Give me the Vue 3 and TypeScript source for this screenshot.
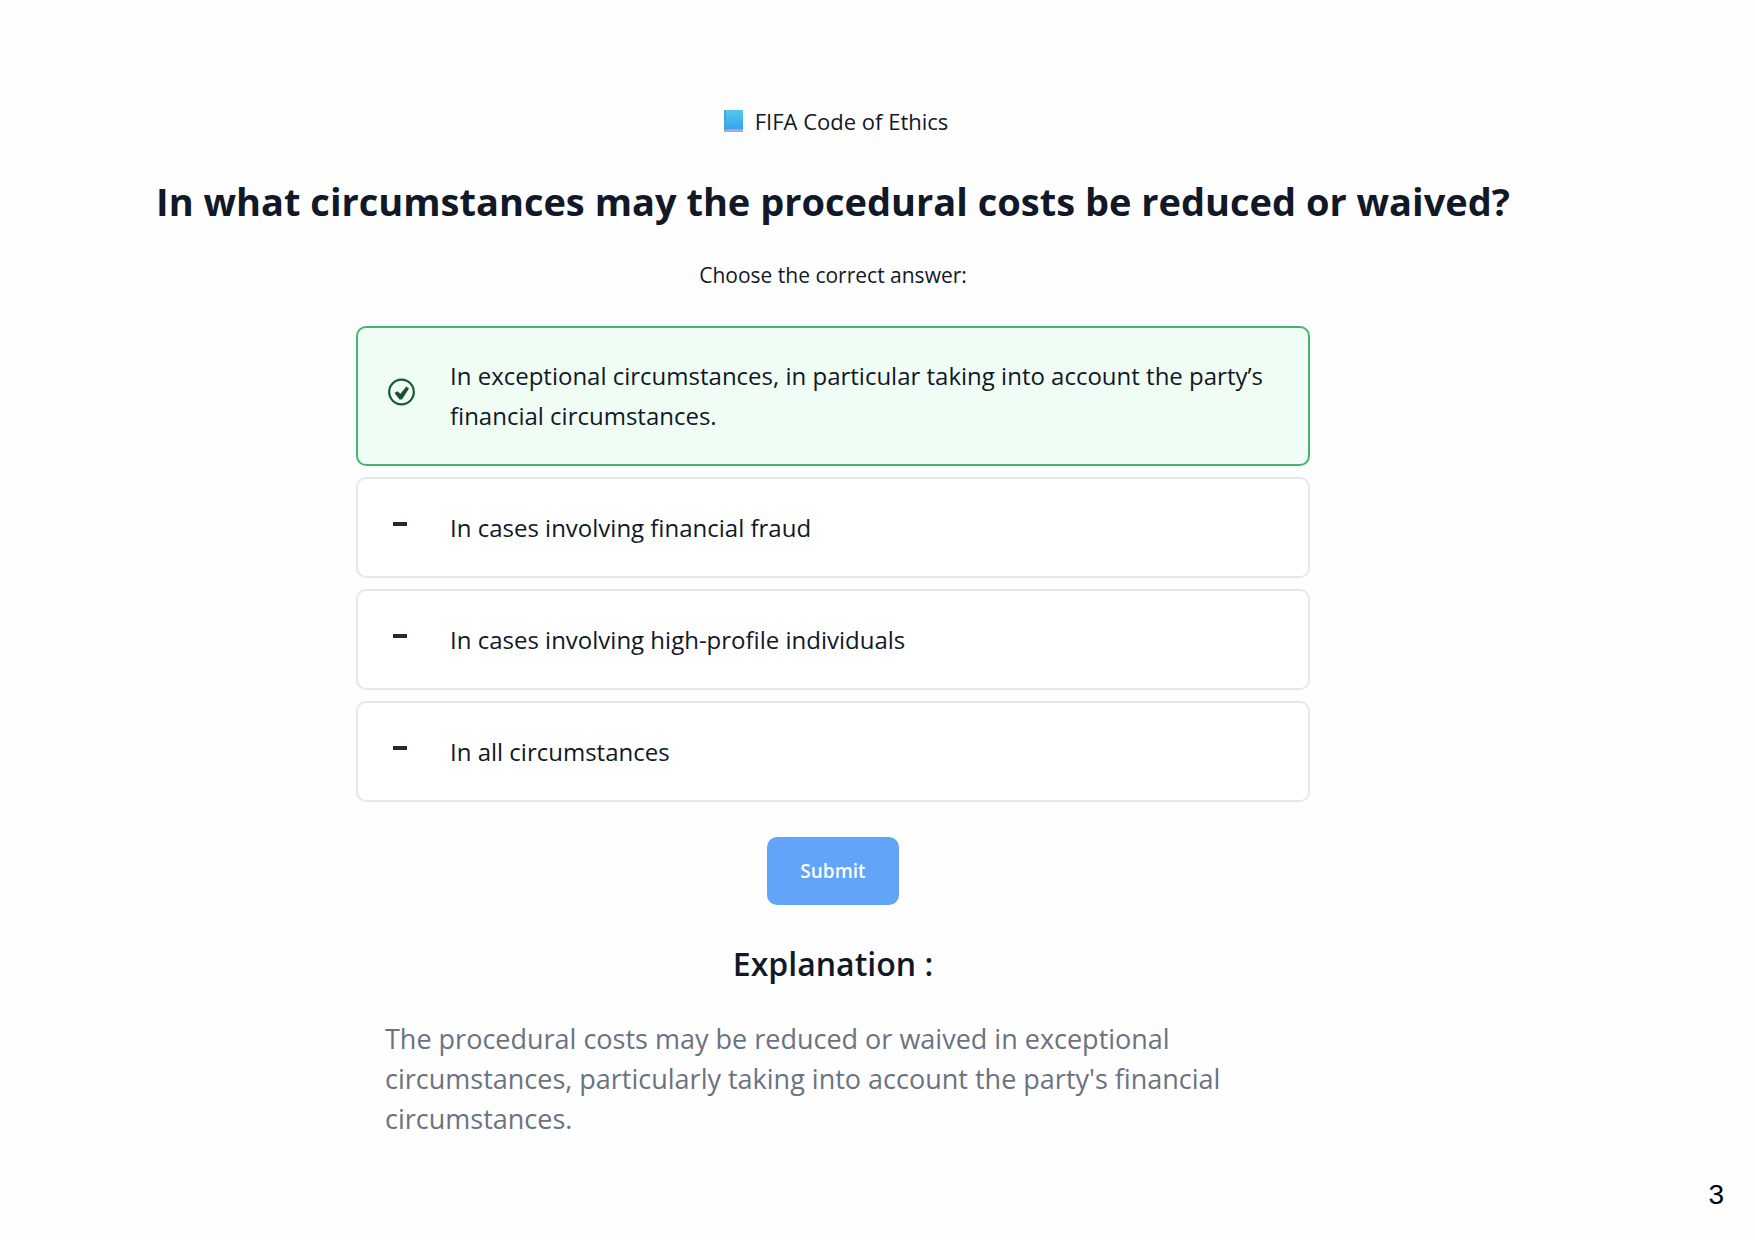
<script setup lang="ts">
import { ref } from 'vue'

interface Option {
  id: number
  text: string
}

const options: Option[] = [
  { id: 1, text: 'In exceptional circumstances, in particular taking into account the party’s financial circumstances.' },
  { id: 2, text: 'In cases involving financial fraud' },
  { id: 3, text: 'In cases involving high-profile individuals' },
  { id: 4, text: 'In all circumstances' },
]

const selected = ref(1)
</script>

<template>
  <div class="page">
    <main class="quiz">
      <p class="topic">
        <svg class="book" viewBox="0 0 19 22" aria-hidden="true">
          <defs>
            <linearGradient id="cover" x1="0" y1="0" x2="0" y2="1">
              <stop offset="0" stop-color="#55c8ee" />
              <stop offset="1" stop-color="#34a4ee" />
            </linearGradient>
          </defs>
          <rect width="19" height="22" fill="#a9a5d8" />
          <rect width="19" height="19" fill="url(#cover)" />
          <rect width="2" height="20" fill="#4fa3d6" />
        </svg>
        <span>FIFA Code of Ethics</span>
      </p>
      <h1 class="question">In what circumstances may the procedural costs be reduced or waived?</h1>
      <p class="hint">Choose the correct answer:</p>

      <div class="options">
        <button
          v-for="option in options"
          :key="option.id"
          type="button"
          class="option"
          :class="{ correct: option.id === selected }"
          :aria-pressed="option.id === selected"
          @click="selected = option.id"
        >
          <span class="mark">
            <svg v-if="option.id === selected" class="check" viewBox="0 0 28 28" aria-hidden="true">
              <circle cx="13.5" cy="14" r="12.3" fill="none" stroke="#1b5a35" stroke-width="2.2" />
              <path d="M6.5 15 L9.3 13.2 L12.5 15.8 L18.3 8.5 L21 10.5 L14 21.5 L11.5 21.5 Z" fill="#14532d" />
            </svg>
            <span v-else class="dash"></span>
          </span>
          <span class="label">{{ option.text }}</span>
        </button>
      </div>

      <button type="button" class="submit">Submit</button>

      <h2 class="heading">Explanation :</h2>
      <p class="explanation">
        The procedural costs may be reduced or waived in exceptional circumstances, particularly taking into account
        the party's financial circumstances.
      </p>
    </main>
    <footer class="page-number">3</footer>
  </div>
</template>

<style>
body {
  margin: 0;
  background: #fefefe;
}
</style>

<style scoped>
.page {
  font-family: 'Open Sans', 'Noto Sans', sans-serif;
  color: #111827;
}

.quiz {
  display: flex;
  flex-direction: column;
  align-items: center;
  margin-right: 89px;
  padding-top: 103px;
}

.topic {
  display: flex;
  align-items: center;
  gap: 12px;
  margin: 0;
  padding-left: 6px;
  font-size: 22px;
  line-height: 36px;
}

.book {
  width: 19px;
  height: 22px;
}

.question {
  margin: 34px 0 0;
  font-size: 38px;
  font-weight: 700;
  line-height: 56px;
  text-align: center;
}

.hint {
  margin: 28px 0 0;
  font-size: 21px;
  line-height: 36px;
}

.options {
  display: flex;
  flex-direction: column;
  gap: 11px;
  width: 954px;
  max-width: 90%;
  margin-top: 33px;
}

.option {
  display: flex;
  align-items: center;
  box-sizing: border-box;
  min-height: 101px;
  padding: 28px 32px 28px 30px;
  border: 2px solid #e5e7eb;
  border-radius: 10px;
  background: #ffffff;
  color: inherit;
  font-family: inherit;
  font-size: 24px;
  line-height: 40px;
  text-align: left;
  cursor: pointer;
}

.option.correct {
  border-color: #41b86c;
  background: #f0fdf4;
}

.mark {
  display: flex;
  flex: none;
  width: 62px;
  padding-bottom: 8px;
}

.check {
  width: 28px;
  height: 28px;
}

.dash {
  width: 14px;
  height: 4px;
  margin-left: 5px;
  background: #1f2937;
}

.submit {
  width: 132px;
  height: 68px;
  margin-top: 35px;
  padding: 0;
  border: 0;
  border-radius: 10px;
  background: #62a4f9;
  color: #ffffff;
  font-family: inherit;
  font-size: 19px;
  font-weight: 600;
  cursor: pointer;
}

.heading {
  margin: 35px 0 0;
  font-size: 32px;
  font-weight: 600;
  line-height: 48px;
}

.explanation {
  width: 896px;
  max-width: 84%;
  margin: 31px 0 0;
  padding-right: 32px;
  box-sizing: border-box;
  color: #6b7280;
  font-size: 27px;
  line-height: 40px;
}

.page-number {
  margin-top: 40px;
  padding-right: 31px;
  color: #000000;
  font-family: 'Liberation Sans', Arial, sans-serif;
  font-size: 28px;
  line-height: 32px;
  text-align: right;
}
</style>
